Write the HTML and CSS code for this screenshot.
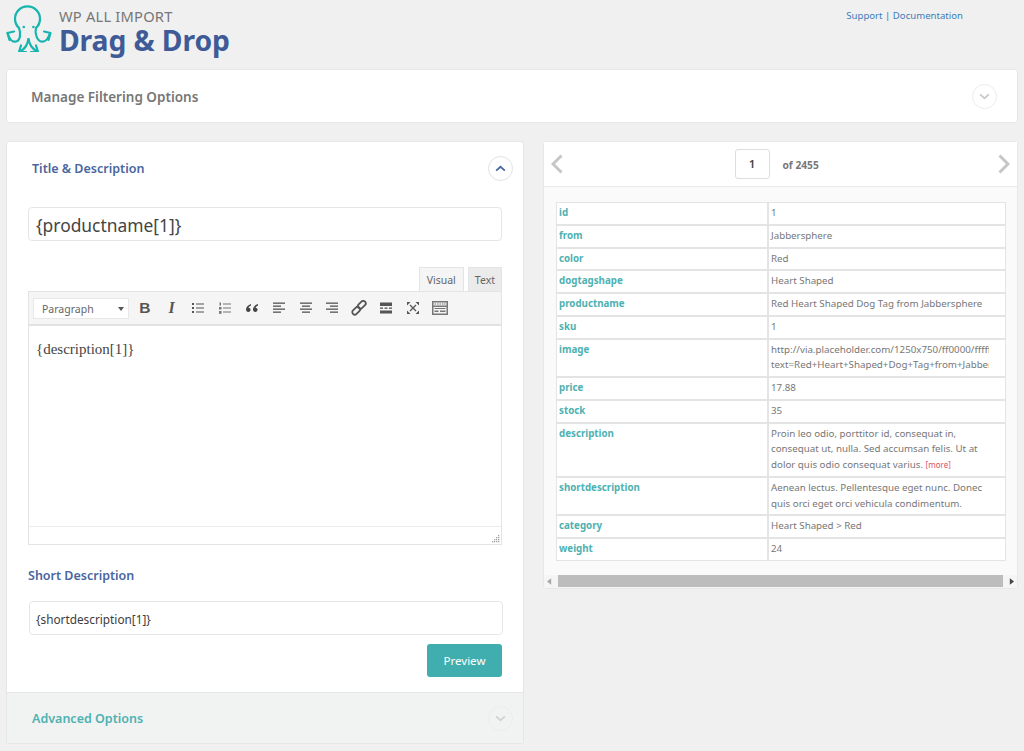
FILE: index.html
```html
<!DOCTYPE html>
<html lang="en">
<head>
<meta charset="utf-8">
<title>WP All Import - Drag &amp; Drop</title>
<link rel="stylesheet" href="styles.css">
</head>
<body>
<header class="top">
  <svg class="logo" viewBox="0 0 52 52" width="52" height="52" fill="none" stroke="#17b5ae" stroke-width="2.2" stroke-linecap="round" stroke-linejoin="round">
    <path d="M19 28A12.500 12.500 0 1 1 36 28"/>
    <circle cx="23.800" cy="27" r="1.300" fill="#17b5ae" stroke="none"/>
    <circle cx="33.400" cy="27" r="1.300" fill="#17b5ae" stroke="none"/>
    <path d="M7.500 33C9 38 12 42.500 16 41.500C20.500 40.500 21 33 19 28"/>
    <path d="M50 33C48.500 38 45.500 42.500 41 41.500C37 40.500 34.500 33 36 28"/>
    <path d="M7.500 33L14 31.500M7.500 33L9.500 40"/>
    <path d="M50.500 33L44 31.500M50.500 33L48.500 40"/>
    <path d="M28.500 39C27.500 45 25 49 19.500 52"/>
    <path d="M28.500 39C29.500 45 32 49 38 52"/>
    <path d="M19 52L26 52M19 52L21 45.500"/>
    <path d="M38 52L31 52M38 52L36 45.500"/>
  </svg>
  <div class="brand">
    <div class="brand-small">WP ALL IMPORT</div>
    <div class="brand-big">Drag &amp; Drop</div>
  </div>
  <nav class="links"><a href="#">Support</a> | <a href="#">Documentation</a></nav>
</header>

<section class="filter-panel">
  <h2 class="filter-title">Manage Filtering Options</h2>
  <span class="circle circle-faint">
    <svg viewBox="0 0 12 8" width="11" height="7" fill="none" stroke="#c9c9c9" stroke-width="2"><path d="M1 1.500L6 6L11 1.500"/></svg>
  </span>
</section>

<main class="columns">
  <section class="left">
    <div class="left-head">
      <h2 class="blue-title">Title &amp; Description</h2>
      <span class="circle">
        <svg viewBox="0 0 12 8" width="11" height="7" fill="none" stroke="#4a66a5" stroke-width="2"><path d="M1 6.500L6 2L11 6.500"/></svg>
      </span>
    </div>
    <div class="left-body">
      <div class="field field-title">{productname[1]}</div>
      <div class="tabs">
        <span class="tab tab-active">Visual</span>
        <span class="tab">Text</span>
      </div>
      <div class="editor">
        <div class="toolbar">
          <span class="select">Paragraph<i class="caret"></i></span>
          <span class="tool tool-b">B</span>
          <span class="tool tool-i">I</span>
          <span class="tool"><svg viewBox="0 0 14 14" width="14" height="14" fill="#555"><rect x="1" y="2" width="2" height="2"/><rect x="1" y="6" width="2" height="2"/><rect x="1" y="10" width="2" height="2"/><rect x="5" y="2.500" width="8" height="1"/><rect x="5" y="6.500" width="8" height="1"/><rect x="5" y="10.500" width="8" height="1"/></svg></span>
          <span class="tool"><svg viewBox="0 0 14 14" width="14" height="14" fill="#777"><rect x="1.500" y="1.500" width="1.500" height="3"/><rect x="1" y="6" width="2.500" height="2.500"/><rect x="1" y="10" width="2.500" height="2.800"/><rect x="5" y="2.500" width="8" height="1"/><rect x="5" y="6.500" width="8" height="1"/><rect x="5" y="10.500" width="8" height="1"/></svg></span>
          <span class="tool"><svg viewBox="0 0 14 14" width="14" height="14" fill="#444"><path d="M6 3C3 4 1 6 1 8.500C1 10 2 11 3.300 11S5.600 10 5.600 8.800S4.600 6.800 3.500 6.800C3.800 5.800 4.800 5 6 4.500ZM13 3C10 4 8 6 8 8.500C8 10 9 11 10.300 11S12.600 10 12.600 8.800S11.600 6.800 10.500 6.800C10.800 5.800 11.800 5 13 4.500Z"/></svg></span>
          <span class="tool"><svg viewBox="0 0 14 14" width="14" height="14" fill="#555"><rect x="1" y="1.500" width="12" height="1.300"/><rect x="1" y="4.500" width="8" height="1.300"/><rect x="1" y="7.500" width="12" height="1.300"/><rect x="1" y="10.500" width="8" height="1.300"/></svg></span>
          <span class="tool"><svg viewBox="0 0 14 14" width="14" height="14" fill="#555"><rect x="1" y="1.500" width="12" height="1.300"/><rect x="3" y="4.500" width="8" height="1.300"/><rect x="1" y="7.500" width="12" height="1.300"/><rect x="3" y="10.500" width="8" height="1.300"/></svg></span>
          <span class="tool"><svg viewBox="0 0 14 14" width="14" height="14" fill="#555"><rect x="1" y="1.500" width="12" height="1.300"/><rect x="5" y="4.500" width="8" height="1.300"/><rect x="1" y="7.500" width="12" height="1.300"/><rect x="5" y="10.500" width="8" height="1.300"/></svg></span>
          <span class="tool"><svg viewBox="0 0 16 16" width="16" height="16" fill="none" stroke="#555" stroke-width="1.800"><rect x="8.300" y="0.300" width="5" height="9" rx="2.500" transform="rotate(45 10.800 4.800)"/><rect x="2.700" y="6.200" width="5" height="9" rx="2.500" transform="rotate(45 5.200 10.700)"/></svg></span>
          <span class="tool"><svg viewBox="0 0 14 14" width="14" height="14" fill="#555"><rect x="1" y="1.500" width="12" height="3.500"/><rect x="1" y="6.500" width="3" height="1.300"/><rect x="5.500" y="6.500" width="3" height="1.300"/><rect x="10" y="6.500" width="3" height="1.300"/><rect x="1" y="9.500" width="12" height="3"/></svg></span>
          <span class="tool"><svg viewBox="0 0 14 14" width="14" height="14" fill="none" stroke="#555" stroke-width="1.300"><path d="M4 4L10 10M10 4L4 10"/><path d="M1 1H4.500L1 4.500ZM13 1H9.500L13 4.500ZM1 13H4.500L1 9.500ZM13 13H9.500L13 9.500Z" fill="#555" stroke="none"/></svg></span>
          <span class="tool"><svg viewBox="0 0 16 14" width="16" height="14" fill="#777"><path d="M0 0H16V14H0ZM1.500 1.500V4.500H14.500V1.500ZM1.500 6V12.500H14.500V6Z" fill-rule="evenodd"/><rect x="2.500" y="2.500" width="1.500" height="1"/><rect x="5" y="2.500" width="1.500" height="1"/><rect x="7.500" y="2.500" width="1.500" height="1"/><rect x="10" y="2.500" width="1.500" height="1"/><rect x="12.200" y="2.500" width="1.300" height="1"/><rect x="2.500" y="7" width="11" height="1"/><rect x="2.500" y="9.500" width="4" height="1.500"/><rect x="8" y="9.500" width="5.500" height="1.500"/></svg></span>
        </div>
        <div class="editor-area">{description[1]}</div>
        <div class="editor-status">
          <svg class="grip" viewBox="0 0 9 9" width="9" height="9" fill="#a5a5a5"><rect x="7" y="1" width="1.300" height="1.300"/><rect x="5" y="3" width="1.300" height="1.300"/><rect x="7" y="3" width="1.300" height="1.300"/><rect x="3" y="5" width="1.300" height="1.300"/><rect x="5" y="5" width="1.300" height="1.300"/><rect x="7" y="5" width="1.300" height="1.300"/><rect x="1" y="7" width="1.300" height="1.300"/><rect x="3" y="7" width="1.300" height="1.300"/><rect x="5" y="7" width="1.300" height="1.300"/><rect x="7" y="7" width="1.300" height="1.300"/></svg>
        </div>
      </div>
      <h3 class="blue-title short-title">Short Description</h3>
      <div class="field field-short">{shortdescription[1]}</div>
      <div class="actions"><button class="preview" type="button">Preview</button></div>
    </div>
    <div class="advanced">
      <h2 class="teal-title">Advanced Options</h2>
      <span class="circle circle-faint circle-adv">
        <svg viewBox="0 0 12 8" width="11" height="7" fill="none" stroke="#d0d3d3" stroke-width="2"><path d="M1 1.500L6 6L11 1.500"/></svg>
      </span>
    </div>
  </section>

  <section class="right">
    <div class="pager">
      <svg class="pager-arrow" viewBox="0 0 12 20" width="12" height="20" fill="none" stroke="#c6c6c6" stroke-width="3"><path d="M10.500 1.500L2 10L10.500 18.500"/></svg>
      <div class="pager-mid"><span class="page-box">1</span><span class="page-of">of 2455</span></div>
      <svg class="pager-arrow" viewBox="0 0 12 20" width="12" height="20" fill="none" stroke="#c6c6c6" stroke-width="3"><path d="M1.500 1.500L10 10L1.500 18.500"/></svg>
    </div>
    <div class="record">
      <table class="data">
        <tr><th>id</th><td>1</td></tr>
        <tr><th>from</th><td>Jabbersphere</td></tr>
        <tr><th>color</th><td>Red</td></tr>
        <tr><th>dogtagshape</th><td>Heart Shaped</td></tr>
        <tr><th>productname</th><td>Red Heart Shaped Dog Tag from Jabbersphere</td></tr>
        <tr><th>sku</th><td>1</td></tr>
        <tr><th>image</th><td><div class="clip">http://via.placeholder.com/1250x750/ff0000/ffffff?<br>text=Red+Heart+Shaped+Dog+Tag+from+Jabbersphere</div></td></tr>
        <tr><th>price</th><td>17.88</td></tr>
        <tr><th>stock</th><td>35</td></tr>
        <tr><th>description</th><td><div class="wrap">Proin leo odio, porttitor id, consequat in, consequat ut, nulla. Sed accumsan felis. Ut at dolor quis odio consequat varius. <a class="more" href="#">[more]</a></div></td></tr>
        <tr><th>shortdescription</th><td><div class="wrap">Aenean lectus. Pellentesque eget nunc. Donec quis orci eget orci vehicula condimentum.</div></td></tr>
        <tr><th>category</th><td>Heart Shaped &gt; Red</td></tr>
        <tr><th>weight</th><td>24</td></tr>
      </table>
    </div>
    <div class="hscroll">
      <svg viewBox="0 0 6 8" width="5" height="7" fill="#a8a8a8"><path d="M5 0V8L0 4Z"/></svg>
      <span class="thumb"></span>
      <svg viewBox="0 0 6 8" width="5" height="7" fill="#444"><path d="M1 0V8L6 4Z"/></svg>
    </div>
  </section>
</main>
</body>
</html>
```
FILE: styles.css
```css
* { box-sizing: border-box; }
html, body { margin: 0; padding: 0; }
body {
  width: 1024px;
  height: 751px;
  overflow: hidden;
  background: #f0f0f0;
  font-family: "Noto Sans", "Open Sans", sans-serif;
  color: #555;
}
h2, h3 { margin: 0; }

.top {
  display: flex;
  height: 69px;
  padding: 0 61px 0 0;
}
.logo { flex: none; }
.brand { margin-left: 7px; }
.brand-small {
  font-size: 14.700px;
  line-height: 20px;
  margin-top: 6px;
  color: #777;
  letter-spacing: 0.2px;
}
.brand-big {
  font-size: 28.300px;
  line-height: 28px;
  font-weight: 700;
  color: #3f5b97;
  letter-spacing: -0.1px;
}
.links {
  margin-left: auto;
  font-size: 9.600px;
  line-height: 16px;
  padding-top: 8px;
  color: #3a6ea5;
}
.links a { color: #3f7cb8; text-decoration: none; }

.filter-panel {
  display: flex;
  align-items: center;
  justify-content: space-between;
  height: 54px;
  margin: 0 6px;
  padding: 0 20px 0 24px;
  background: #fff;
  border: 1px solid #e6e6e6;
  border-radius: 3px;
}
.filter-title {
  margin-top: 2px;
  font-size: 13.500px;
  font-weight: 600;
  color: #777;
}
.circle {
  display: flex;
  align-items: center;
  justify-content: center;
  width: 25px;
  height: 25px;
  flex: none;
  border: 1px solid #e2e2e2;
  border-radius: 50%;
  background: #fff;
}
.circle-faint { border-color: #ececec; }
.circle-adv { background: transparent; }

.columns {
  display: flex;
  align-items: flex-start;
  gap: 19px;
  margin: 18px 6px 0 6px;
}
.left {
  width: 518px;
  flex: none;
  background: #fff;
  border: 1px solid #e6e6e6;
  border-radius: 3px;
}
.left-head {
  display: flex;
  align-items: center;
  justify-content: space-between;
  height: 53px;
  padding: 0 10px 0 25px;
}
.blue-title {
  font-size: 12.500px;
  font-weight: 600;
  color: #4a66a0;
}
.left-body { padding: 12px 21px 0 21px; }
.field {
  background: #fff;
  border: 1px solid #e6e6e6;
  border-radius: 4px;
  color: #444;
}
.field-title {
  width: 474px;
  height: 34px;
  padding: 0 7px;
  font-size: 17.400px;
  line-height: 34px;
}
.tabs {
  display: flex;
  justify-content: flex-end;
  gap: 4px;
  width: 474px;
  margin-top: 26px;
}
.tab {
  height: 24px;
  padding: 0 6px;
  font-size: 10.500px;
  line-height: 24px;
  color: #666;
  background: #ebebeb;
  border: 1px solid #e4e4e4;
  border-bottom: 0;
}
.tab-active { background: #f5f5f5; padding: 0 7px; }
.editor {
  width: 474px;
  border: 1px solid #e4e4e4;
}
.toolbar {
  display: flex;
  align-items: center;
  height: 34px;
  padding: 0 4px;
  background: #f5f5f5;
  border-bottom: 2px solid #e2e2e2;
}
.select {
  position: relative;
  display: block;
  width: 96px;
  height: 21px;
  padding-left: 8px;
  margin-right: 2.500px;
  font-size: 10.500px;
  line-height: 20px;
  color: #666;
  background: #fff;
  border: 1px solid #e8e8e8;
}
.caret {
  position: absolute;
  right: 4px;
  top: 8px;
  border-style: solid;
  border-width: 4px 3.500px 0;
  border-color: #555 transparent transparent;
}
.tool {
  display: flex;
  align-items: center;
  justify-content: center;
  width: 26.800px;
  height: 24px;
  flex: none;
  color: #555;
}
.tool-b { font: 700 15.500px "Liberation Sans", sans-serif; }
.tool-i { font: italic 700 16px "Liberation Serif", serif; }
.editor-area {
  height: 200px;
  padding: 13px 7px;
  font-family: "Liberation Serif", serif;
  font-size: 15px;
  line-height: 20px;
  color: #444;
  background: #fff;
}
.editor-status {
  display: flex;
  justify-content: flex-end;
  align-items: flex-end;
  height: 18px;
  padding: 0 1px 1px;
  background: #fff;
  border-top: 1px solid #ececec;
}
.short-title { margin-top: 22px; line-height: 17px; }
.field-short {
  width: 474px;
  height: 34px;
  margin: 17px 0 0 1px;
  padding: 0 6px;
  font-size: 11.800px;
  line-height: 34px;
  color: #3d3d3d;
}
.actions {
  display: flex;
  justify-content: flex-end;
  width: 474px;
  margin-top: 9px;
}
.preview {
  width: 75px;
  height: 33px;
  padding: 0;
  font: 400 11.500px "Noto Sans", sans-serif;
  color: #fff;
  background: #40aeae;
  border: 0;
  border-radius: 3px;
}
.advanced {
  display: flex;
  align-items: center;
  justify-content: space-between;
  height: 51px;
  margin-top: 15px;
  padding: 0 10px 0 25px;
  background: #f1f3f3;
  border-top: 1px solid #e6e6e6;
}
.teal-title {
  font-size: 12.500px;
  font-weight: 600;
  color: #4eb1b1;
}

.right {
  width: 475px;
  flex: none;
  background: #fafafa;
  border: 1px solid #e8e8e8;
  border-radius: 3px;
}
.pager {
  display: flex;
  align-items: center;
  justify-content: space-between;
  height: 45px;
  padding: 0 7px;
  background: #fff;
  border-bottom: 1px solid #e9e9e9;
}
.pager-arrow { flex: none; }
.pager-mid {
  display: flex;
  align-items: center;
  margin-left: 4px;
}
.page-box {
  width: 35px;
  height: 30px;
  font-size: 11.500px;
  font-weight: 600;
  line-height: 28px;
  text-align: center;
  color: #444;
  background: #fff;
  border: 1px solid #ddd;
  border-radius: 3px;
}
.page-of {
  margin-left: 13px;
  width: 48px;
  padding-top: 2px;
  font-size: 10.200px;
  font-weight: 700;
  color: #777;
}
.record { padding: 15px 11px 14px 12px; }
.data {
  width: 450px;
  table-layout: fixed;
  border-collapse: separate;
  border-spacing: 0;
  font-size: 9.750px;
  line-height: 15.750px;
}
.data th, .data td {
  padding: 2px 2px 3px;
  vertical-align: top;
  text-align: left;
  background: #fff;
  border: 1px solid #e4e4e4;
}
.data th {
  width: 212px;
  font-weight: 700;
  color: #4eb1b1;
}
.data td { color: #777; padding-left: 2px; }
.clip { width: 218px; overflow: hidden; white-space: nowrap; }
.wrap { width: 212px; }
.more { font-size: 8px; color: #e8505b; text-decoration: none; }
.hscroll {
  display: flex;
  align-items: center;
  justify-content: space-between;
  height: 13px;
  padding: 0 3px 0 3px;
  background: #f5f5f5;
}
.thumb {
  width: 445px;
  height: 12px;
  background: #bdbdbd;
}
```
